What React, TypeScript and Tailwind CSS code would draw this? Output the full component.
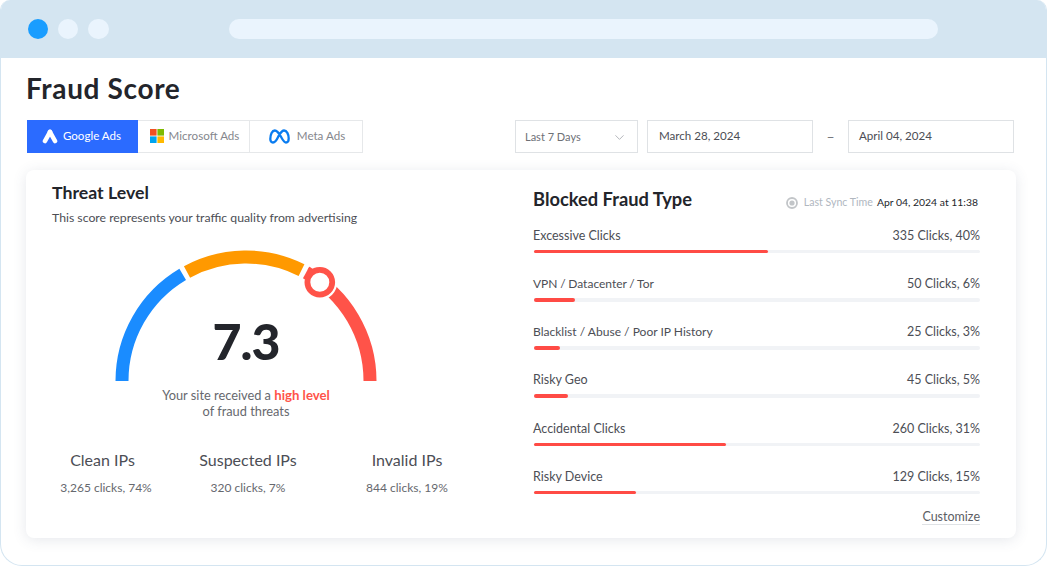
import { ChevronDown } from "lucide-react";

const fraudTypes = [
  { name: "Excessive Clicks", value: "335 Clicks, 40%", pct: 52.4, tight: "" },
  { name: "VPN / Datacenter / Tor", value: "50 Clicks, 6%", pct: 9.2, tight: "text-[12px] [word-spacing:-0.4px]" },
  { name: "Blacklist / Abuse / Poor IP History", value: "25 Clicks, 3%", pct: 5.8, tight: "text-[12.05px]" },
  { name: "Risky Geo", value: "45 Clicks, 5%", pct: 7.6, tight: "" },
  { name: "Accidental Clicks", value: "260 Clicks, 31%", pct: 43.1, tight: "" },
  { name: "Risky Device", value: "129 Clicks, 15%", pct: 22.9, tight: "" },
];

const ipStats = [
  { name: "Clean IPs", value: "3,265 clicks, 74%", cls: "w-[92px] ml-[8px]", head: "pr-[7px]" },
  { name: "Suspected IPs", value: "320 clicks, 7%", cls: "w-[100px] ml-[46px]", head: "" },
  { name: "Invalid IPs", value: "844 clicks, 19%", cls: "w-[82px] ml-[68px]", head: "" },
];

// point on the gauge arc, angle measured from the left end
function polar(deg: number, r = 124) {
  const a = (deg * Math.PI) / 180;
  return [131 - r * Math.cos(a), 131 - r * Math.sin(a)];
}

function arc(from: number, to: number) {
  const [x1, y1] = polar(from);
  const [x2, y2] = polar(to);
  return `M${x1} ${y1}A124 124 0 0 1 ${x2} ${y2}`;
}

function Gauge() {
  return (
    <svg width="262" height="131" viewBox="0 0 262 131" className="overflow-visible">
      <path d={arc(0, 59.3)} fill="none" stroke="#1a8cff" strokeWidth="13" />
      <path d={arc(61.6, 116.6)} fill="none" stroke="#ff9900" strokeWidth="13" />
      <path d={arc(119, 180)} fill="none" stroke="#ff5349" strokeWidth="13" />
      <circle cx="204.8" cy="32.3" r="17.5" fill="#fff" />
      <path d={arc(119, 124)} fill="none" stroke="#ff5349" strokeWidth="13" />
      <circle cx="204.8" cy="32.3" r="12.4" fill="#fff" stroke="#ff5349" strokeWidth="5.8" />
    </svg>
  );
}

function GoogleAdsIcon() {
  return (
    <svg width="16" height="15" viewBox="0 0 16 15">
      <path d="M8 3 L3 12" stroke="#fff" strokeWidth="4.6" strokeLinecap="round" />
      <path d="M8 3 L13 12" stroke="#fff" strokeWidth="4.6" strokeLinecap="round" />
    </svg>
  );
}

function MicrosoftIcon() {
  return (
    <svg width="14" height="14" viewBox="0 0 14 14">
      <rect width="6.6" height="6.6" fill="#f25022" />
      <rect x="7.4" width="6.6" height="6.6" fill="#7fba00" />
      <rect y="7.4" width="6.6" height="6.6" fill="#00a4ef" />
      <rect x="7.4" y="7.4" width="6.6" height="6.6" fill="#ffb900" />
    </svg>
  );
}

function MetaIcon() {
  return (
    <svg width="21" height="15" viewBox="0 0 21 15" fill="none">
      <path
        d="M1.300 10C1.300 5.500 3.200 1.500 5.800 1.500c2.400 0 4.400 3 6.200 6.200 1.600 2.900 3 5.800 5 5.800 1.700 0 2.700-1.500 2.700-4 0-4.200-2-8-4.600-8-2.400 0-4.100 3-5.500 5.400C7.800 10.800 6.400 13.500 4 13.500c-1.700 0-2.700-1.400-2.700-3.500Z"
        stroke="#0a7cf0"
        strokeWidth="2.3"
        strokeLinejoin="round"
      />
    </svg>
  );
}

function SyncIcon() {
  return (
    <svg width="12" height="12" viewBox="0 0 12 12" fill="none">
      <circle cx="6" cy="6" r="5" stroke="#c2c5c8" strokeWidth="1.8" />
      <circle cx="6" cy="6" r="2.6" fill="#c2c5c8" />
    </svg>
  );
}

export default function App() {
  return (
    <div className="h-[566px] w-[1047px] overflow-hidden rounded-t-[10px] rounded-b-[22px] border-x border-b border-[#d4e5f1] bg-white font-['Lato',sans-serif] text-[#23252b]">
      <div className="-mx-px flex h-[58px] items-center bg-[#d4e5f1] pl-[28px]">
        <div className="flex gap-[10px]">
          <span className="h-5 w-5 rounded-full bg-[#1a9dff]" />
          <span className="h-5 w-5 rounded-full bg-[#eaf4fd]" />
          <span className="h-5 w-[21px] rounded-full bg-[#eaf4fd]" />
        </div>
        <div className="ml-[120px] h-5 w-[709px] rounded-full bg-[#eaf4fd]" />
      </div>

      <h1 className="ml-[25px] mt-[13px] text-[28px] font-bold leading-[34px] tracking-[0.65px]">Fraud Score</h1>

      <div className="ml-[26px] mr-[32px] mt-[15px] flex items-start justify-between">
        <div className="flex h-[33px] text-[11.6px] text-[#85878d]">
          <div className="flex w-[111px] items-center justify-center gap-[5px] bg-[#2b6bff] pb-px pr-[2px] text-white">
            <GoogleAdsIcon />
            Google Ads
          </div>
          <div className="flex w-[112px] items-center justify-center gap-[5px] border-y border-r border-[#e6e8ea] pb-px pl-[2px]">
            <MicrosoftIcon />
            Microsoft Ads
          </div>
          <div className="flex w-[113px] items-center justify-center gap-[7px] border-y border-r border-[#e6e8ea] pb-px pl-[2px]">
            <MetaIcon />
            Meta Ads
          </div>
        </div>
        <div className="flex items-center text-[11.6px]">
          <div className="flex h-[33px] w-[123px] items-center justify-between border border-[#dfe2e5] pl-[9px] pr-[10px] pt-[2px] text-[11px] text-[#6d7076]">
            Last 7 Days
            <ChevronDown size={15} strokeWidth={1.4} className="text-[#a9acb1]" />
          </div>
          <div className="ml-[9px] flex h-[33px] w-[166px] items-center border border-[#dfe2e5] pb-[2px] pl-[11px] text-[#4c4e55]">
            March 28, 2024
          </div>
          <span className="w-[35px] text-center text-[14px] text-[#6d7076]">–</span>
          <div className="flex h-[33px] w-[166px] items-center border border-[#dfe2e5] pb-[2px] pl-[10px] text-[#4c4e55]">
            April 04, 2024
          </div>
        </div>
      </div>

      <div className="ml-[25px] mt-[17px] flex h-[368px] w-[990px] rounded-[8px] bg-white shadow-[0_2px_14px_rgba(60,80,110,0.13)]">
        <section className="w-[507px] pl-[26px] pt-[12px]">
          <h2 className="text-[17.7px] font-bold leading-[21px]">Threat Level</h2>
          <p className="mt-[7px] text-[12.25px] leading-[16px] text-[#4c4e55]">
            This score represents your traffic quality from advertising
          </p>
          <div className="relative ml-[63px] mt-[24px] h-[131px] w-[262px]">
            <Gauge />
            <div className="absolute inset-x-0 top-[62px] text-center text-[50px] font-black leading-[58px] tracking-[-1px]">7.3</div>
          </div>
          <p className="ml-[63px] mt-[6px] w-[262px] text-center text-[12.8px] leading-[16px] text-[#66686e]">
            Your site received a <span className="text-[13.2px] font-bold text-[#ff5349]">high level</span>
            <br />
            of fraud threats
          </p>
          <div className="mt-[31px] flex">
            {ipStats.map((s) => (
              <div key={s.name} className={`flex shrink-0 flex-col items-center whitespace-nowrap ${s.cls}`}>
                <span className={`text-[16px] leading-[20px] text-[#4c4e55] ${s.head}`}>{s.name}</span>
                <span className="mt-[10px] text-[12px] leading-[16px] text-[#66686e]">{s.value}</span>
              </div>
            ))}
          </div>
        </section>

        <section className="w-[447px] pt-[18px]">
          <div className="flex items-center justify-between">
            <h2 className="text-[18.3px] font-bold leading-[22px]">Blocked Fraud Type</h2>
            <div className="flex items-center pr-[2px] pt-[7px] text-[10.4px]">
              <SyncIcon />
              <span className="ml-[6px] text-[10.6px] text-[#b0b7bf]">Last Sync Time</span>
              <span className="ml-[4px] text-[#23252b]">Apr 04, 2024 at 11:38</span>
            </div>
          </div>
          <div className="mt-[17px] flex flex-col gap-[22.7px]">
            {fraudTypes.map((t) => (
              <div key={t.name}>
                <div className="flex justify-between text-[12.5px] leading-[16px] text-[#4c4e55]">
                  <span className={t.tight}>{t.name}</span>
                  <span>{t.value}</span>
                </div>
                <div className="ml-px mt-[6px] h-[3.5px] rounded-full bg-[#f1f3f6]">
                  <div className="h-full rounded-full bg-[#ff4b45]" style={{ width: `${t.pct}%` }} />
                </div>
              </div>
            ))}
          </div>
          <div className="mt-[9px] text-right">
            <span className="border-b border-[#dfe2e5] text-[12.5px] leading-[16px] text-[#5c5e64]">Customize</span>
          </div>
        </section>
      </div>
    </div>
  );
}
